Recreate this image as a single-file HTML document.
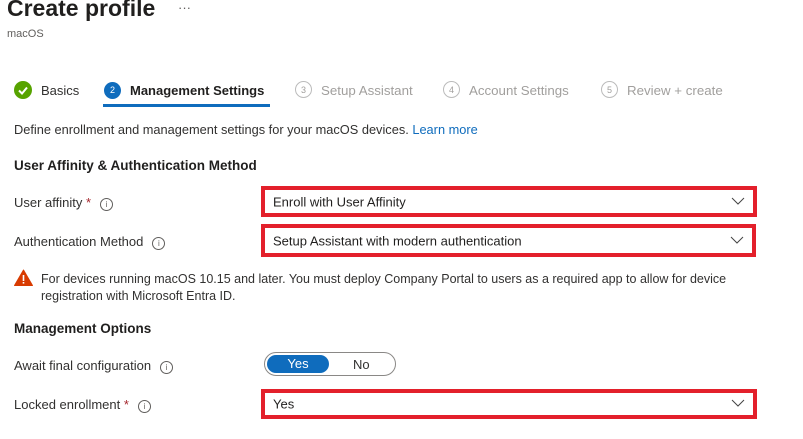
<!DOCTYPE html>
<html><head><meta charset="utf-8"><style>
body{margin:0;width:803px;height:439px;background:#fff;font-family:"Liberation Sans",sans-serif;color:#323130;position:relative;overflow:hidden;font-size:13px}
.a{position:absolute;white-space:nowrap}
.box{position:absolute;border:4px solid #e3202b;box-sizing:border-box;background:#fff}
.box span{position:absolute;left:8px;top:50%;transform:translateY(-50%);font-size:13px;color:#201f1e}
.chev{position:absolute;right:8px;top:50%;margin-top:-6px}
.info{display:inline-block;width:11px;height:11px;border:1px solid #605e5c;border-radius:50%;font-size:8px;line-height:11px;text-align:center;color:#605e5c;vertical-align:0px;margin-left:9px}
.step{display:inline-block;width:17px;height:17px;border-radius:50%;font-size:9px;line-height:17px;text-align:center;box-sizing:border-box}
</style></head><body>
<div class="a" style="left:7px;top:-5px;font-size:23px;font-weight:bold;color:#201f1e">Create profile</div>
<div class="a" style="left:178px;top:0px;font-size:13px;color:#605e5c">···</div>
<div class="a" style="left:7px;top:28px;font-size:11px;color:#605e5c">macOS</div>

<div class="a" style="left:14px;top:81px"><svg width="18" height="18"><circle cx="9" cy="9" r="9" fill="#57a300"/><path d="M5 9.5l3 3 5-6" stroke="#fff" stroke-width="2" fill="none"/></svg></div>
<div class="a" style="left:41px;top:83px">Basics</div>
<div class="a" style="left:104px;top:81px"><span class="step" style="background:#0f6cbd;color:#fff">2</span></div>
<div class="a" style="left:130px;top:83px;font-weight:bold;color:#201f1e">Management Settings</div>
<div class="a" style="left:103px;top:104px;width:167px;height:3px;background:#0f6cbd"></div>
<div class="a" style="left:295px;top:81px"><span class="step" style="border:1px solid #bbb;color:#a19f9d">3</span></div>
<div class="a" style="left:321px;top:83px;color:#a19f9d;font-size:13.3px">Setup Assistant</div>
<div class="a" style="left:443px;top:81px"><span class="step" style="border:1px solid #bbb;color:#a19f9d">4</span></div>
<div class="a" style="left:469px;top:83px;color:#a19f9d;font-size:13.3px">Account Settings</div>
<div class="a" style="left:601px;top:81px"><span class="step" style="border:1px solid #bbb;color:#a19f9d">5</span></div>
<div class="a" style="left:627px;top:83px;color:#a19f9d;font-size:13.3px">Review + create</div>

<div class="a" style="left:14px;top:122px;font-size:12.8px">Define enrollment and management settings for your macOS devices. <span style="color:#0f6cbd">Learn more</span></div>
<div class="a" style="left:14px;top:158px;font-weight:bold;font-size:13.5px;color:#201f1e">User Affinity &amp; Authentication Method</div>

<div class="a" style="left:14px;top:195px">User affinity <span style="color:#a4262c">*</span><span class="info">i</span></div>
<div class="box" style="left:261px;top:186px;width:496px;height:31px"><span>Enroll with User Affinity</span><svg class="chev" width="14" height="10"><path d="M1 2l6 6 6-6" stroke="#444" fill="none"/></svg></div>

<div class="a" style="left:14px;top:234px">Authentication Method<span class="info">i</span></div>
<div class="box" style="left:261px;top:224px;width:495px;height:33px"><span>Setup Assistant with modern authentication</span><svg class="chev" width="14" height="10"><path d="M1 2l6 6 6-6" stroke="#444" fill="none"/></svg></div>

<div class="a" style="left:14px;top:269px"><svg width="19" height="17"><path d="M9.5 1L18.5 16.5H0.5Z" fill="#d83b01" stroke="#d83b01" stroke-linejoin="round"/><rect x="8.7" y="6" width="1.6" height="6" fill="#fff"/><rect x="8.7" y="13" width="1.6" height="1.6" fill="#fff"/></svg></div>
<div class="a" style="left:41px;top:271px;font-size:12.5px;line-height:17px">For devices running macOS 10.15 and later. You must deploy Company Portal to users as a required app to allow for device<br>registration with Microsoft Entra ID.</div>

<div class="a" style="left:14px;top:321px;font-weight:bold;font-size:13.5px;color:#201f1e">Management Options</div>

<div class="a" style="left:14px;top:358px">Await final configuration<span class="info">i</span></div>
<div class="a" style="left:264px;top:352px;width:132px;height:24px;border:1px solid #8a8886;border-radius:12px;box-sizing:border-box"></div>
<div class="a" style="left:267px;top:355px;width:62px;height:18px;border-radius:9px;background:#0f6cbd;color:#fff;text-align:center;line-height:18px">Yes</div>
<div class="a" style="left:353px;top:357px">No</div>

<div class="a" style="left:14px;top:397px">Locked enrollment <span style="color:#a4262c">*</span><span class="info">i</span></div>
<div class="box" style="left:261px;top:389px;width:496px;height:30px"><span>Yes</span><svg class="chev" width="14" height="10"><path d="M1 2l6 6 6-6" stroke="#444" fill="none"/></svg></div>
</body></html>
